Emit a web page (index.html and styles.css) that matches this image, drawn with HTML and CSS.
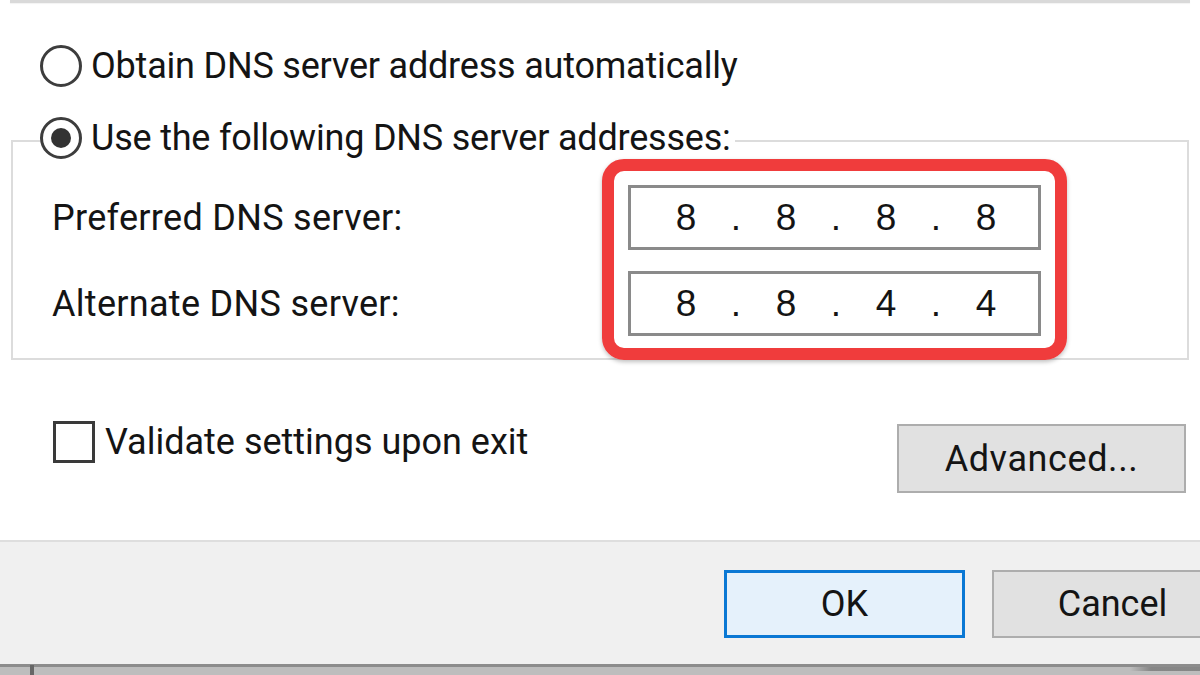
FILE: index.html
```html
<!DOCTYPE html>
<html lang="en">
<head>
<meta charset="utf-8">
<title>DNS settings</title>
<link rel="stylesheet" href="styles.css">
</head>
<body>
<div class="page">
  <div class="top-edge"></div>

  <div class="radio-row first">
    <span class="radio"></span>
    <span class="text">Obtain DNS server address automatically</span>
  </div>

  <fieldset class="group">
    <legend class="radio-row legend">
      <span class="radio checked"></span>
      <span class="text">Use the following DNS server addresses:</span>
    </legend>
    <div class="group-body">
      <div class="field-row">
        <span class="field-label">Preferred DNS server:</span>
        <div class="ip">
          <span class="oct">8</span><span class="dot">.</span><span class="oct">8</span><span class="dot">.</span><span class="oct">8</span><span class="dot">.</span><span class="oct">8</span>
        </div>
      </div>
      <div class="field-row">
        <span class="field-label">Alternate DNS server:</span>
        <div class="ip">
          <span class="oct">8</span><span class="dot">.</span><span class="oct">8</span><span class="dot">.</span><span class="oct">4</span><span class="dot">.</span><span class="oct">4</span>
        </div>
      </div>
    </div>
  </fieldset>

  <div class="options-row">
    <div class="check-group">
      <span class="checkbox"></span>
      <span class="text">Validate settings upon exit</span>
    </div>
    <button class="btn advanced" type="button">Advanced...</button>
  </div>

  <div class="footer">
    <button class="btn primary" type="button">OK</button>
    <button class="btn" type="button">Cancel</button>
  </div>

  <div class="taskbar"><span class="tick"></span><span class="shade"></span></div>

  <div class="highlight"></div>
</div>
</body>
</html>
```

FILE: styles.css
```css
* { box-sizing: border-box; }

html, body {
  margin: 0;
  padding: 0;
  background: #ffffff;
}

body {
  font-family: Roboto, "Noto Sans", sans-serif;
  font-size: 36px;
  color: #141414;
}

.page {
  position: relative;
  width: 1200px;
  height: 675px;
  overflow: hidden;
  display: flex;
  flex-direction: column;
}

.top-edge {
  margin-left: 10px;
  width: 1180px;
  height: 3px;
  flex: none;
  background: #d9d9d9;
  box-shadow: 0 1px 1px rgba(0,0,0,0.05);
}

.radio-row {
  display: flex;
  align-items: center;
  gap: 9px;
  height: 42px;
  line-height: 42px;
  white-space: nowrap;
  letter-spacing: -0.2px;
}

.radio-row.first {
  margin-top: 42px;
  margin-left: 40px;
  flex: none;
}

.radio {
  width: 42px;
  height: 42px;
  flex: none;
  border: 3px solid #3d3d3d;
  border-radius: 50%;
  background: #fff;
  display: flex;
  align-items: center;
  justify-content: center;
}

.radio.checked::after {
  content: "";
  width: 20px;
  height: 20px;
  border-radius: 50%;
  background: #333333;
}

.group {
  margin: 30px 0 0 11px;
  padding: 0;
  width: 1178px;
  flex: none;
  border: 2px solid #dcdcdc;
}

.group .legend {
  margin-left: 27px;
  padding: 0 4px 6px 0;
  height: 48px;
  align-items: flex-start;
}

.group-body {
  padding: 20px 0 22px 39px;
  display: flex;
  flex-direction: column;
  gap: 21px;
}

.field-row {
  display: flex;
  align-items: center;
  height: 65px;
}

.field-label {
  width: 576px;
  flex: none;
  white-space: nowrap;
  letter-spacing: 0.3px;
}

.ip {
  width: 413px;
  height: 65px;
  border: 3px solid #8a8a8a;
  background: #fff;
  display: flex;
  align-items: center;
  padding-left: 16px;
  font-family: "Liberation Sans", Arial, sans-serif;
  font-size: 37px;
  color: #141414;
}

.oct {
  width: 78px;
  text-align: center;
}

.dot {
  width: 22px;
  text-align: center;
}

.options-row {
  margin-top: 61px;
  display: flex;
  align-items: flex-start;
  flex: none;
}

.check-group {
  margin-left: 53px;
  display: flex;
  align-items: center;
  gap: 10px;
  height: 42px;
  white-space: nowrap;
}

.checkbox {
  width: 42px;
  height: 42px;
  flex: none;
  border: 3px solid #3a3a3a;
  background: #fff;
}

.btn {
  font-family: Roboto, "Noto Sans", sans-serif;
  font-size: 36px;
  color: #141414;
  width: 241px;
  height: 68px;
  padding: 0;
  border: 2px solid #adadad;
  background: #e1e1e1;
  flex: none;
}

.btn.advanced {
  margin-left: auto;
  margin-right: 14px;
  margin-top: 3px;
  width: 289px;
  height: 69px;
  letter-spacing: 0.6px;
}

.btn.primary {
  border: 3px solid #0a78d4;
  background: #e5f1fb;
}

.footer {
  margin-top: 47px;
  height: 124px;
  flex: none;
  border-top: 2px solid #dedede;
  background: #f0f0f0;
  display: flex;
  gap: 27px;
  padding: 28px 0 0 724px;
}

.taskbar {
  position: relative;
  flex: 1;
  border-top: 3px solid #8c8c8c;
  background: #bdbdbd;
}

.taskbar .tick {
  position: absolute;
  left: 30px;
  top: -2px;
  width: 4px;
  height: 14px;
  background: #666;
}

.taskbar .shade {
  position: absolute;
  right: 0;
  top: 0;
  width: 70px;
  height: 4px;
  background: linear-gradient(to right, rgba(80,80,80,0), rgba(80,80,80,0.5) 30%);
}

.highlight {
  position: absolute;
  left: 602px;
  top: 159px;
  width: 465px;
  height: 201px;
  border: 12px solid #f03c3c;
  border-radius: 22px;
  box-shadow: 0 2px 4px rgba(0,0,0,0.25);
  pointer-events: none;
}
```
